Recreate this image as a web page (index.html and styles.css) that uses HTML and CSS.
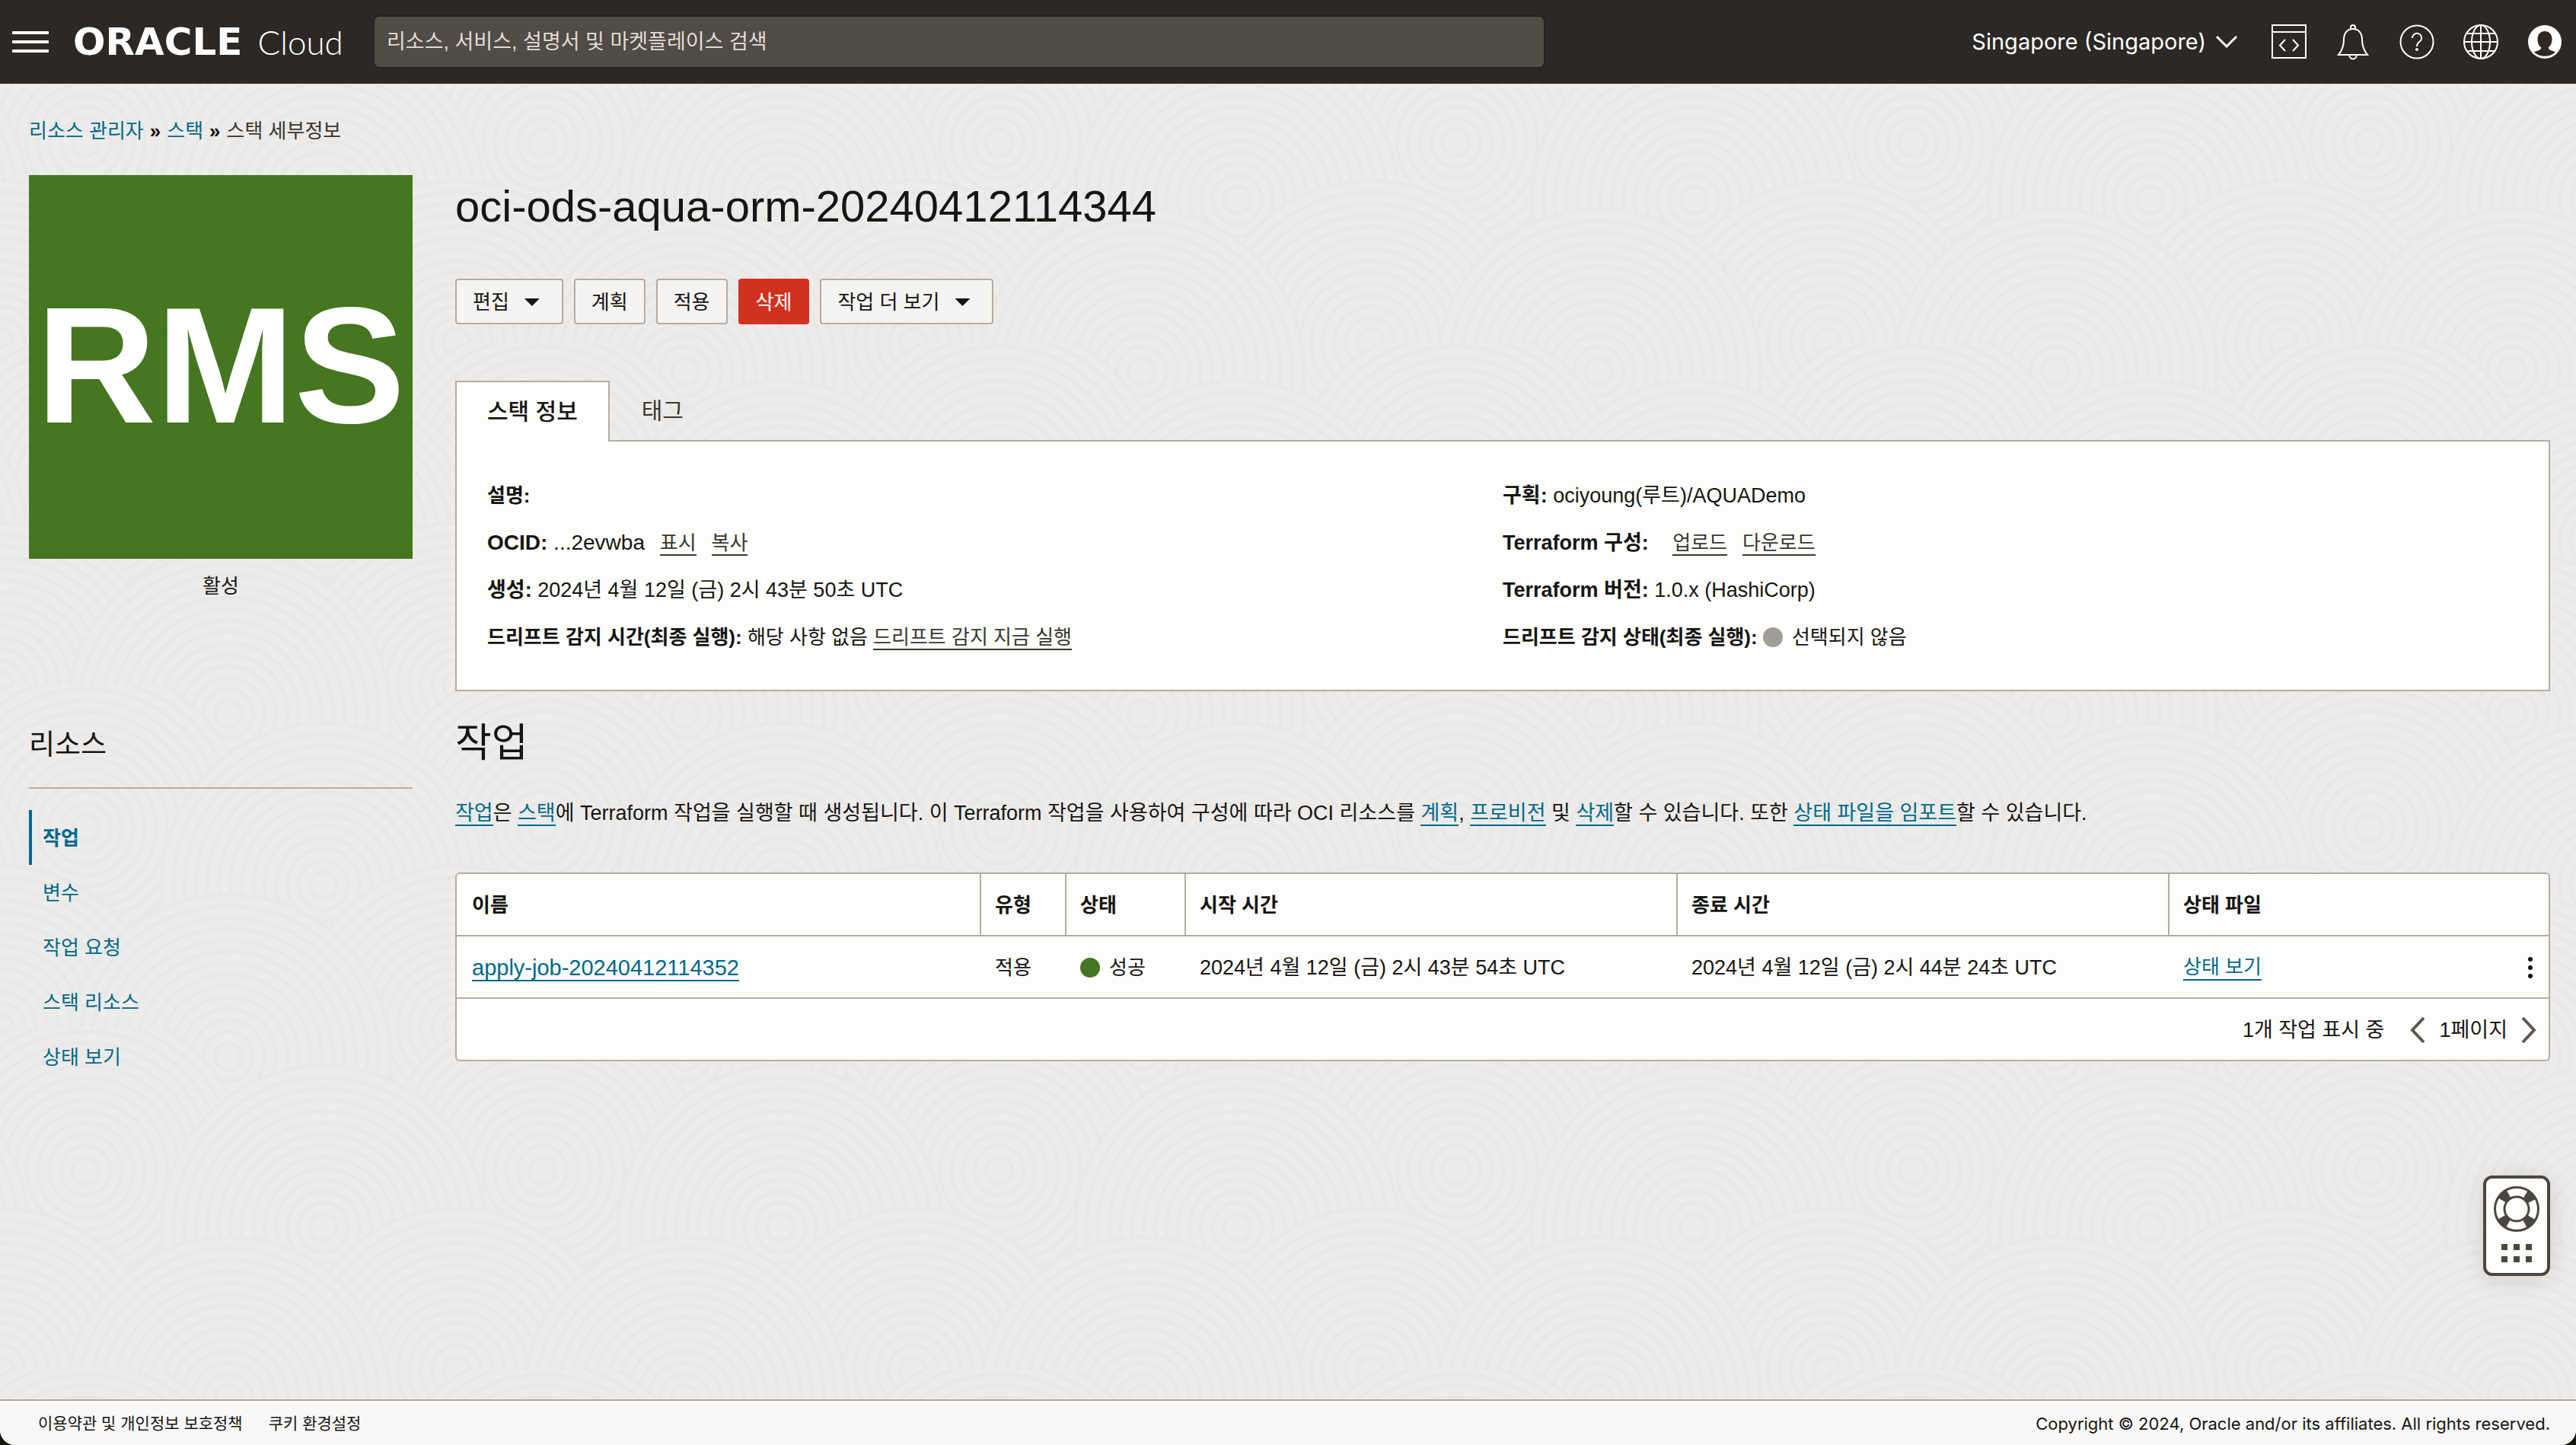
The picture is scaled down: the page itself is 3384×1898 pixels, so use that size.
FILE: index.html
```html
<!DOCTYPE html>
<html lang="ko">
<head>
<meta charset="utf-8">
<title>스택 세부정보</title>
<link rel="stylesheet" href="styles.css">
</head>
<body>
<header class="topbar">
  <button class="icon-button menu-button" aria-label="메뉴">
    <svg width="48" height="28" viewBox="0 0 48 28" fill="#fff"><rect width="48" height="4" rx="1"/><rect y="12" width="48" height="4" rx="1"/><rect y="24" width="48" height="4" rx="1"/></svg>
  </button>
  <a class="brand" href="#"><span class="brand-name">ORACLE</span><span class="brand-product">Cloud</span></a>
  <input class="search" type="search" aria-label="검색" placeholder="리소스, 서비스, 설명서 및 마켓플레이스 검색">
  <nav class="tools">
    <button class="region">Singapore (Singapore)
      <svg width="30" height="18" viewBox="0 0 30 18" fill="none" stroke="#fff" stroke-width="3"><path d="M2 2l13 13L28 2"/></svg>
    </button>
    <button class="icon-button" aria-label="개발자 도구">
      <svg width="46" height="48" viewBox="0 0 46 48" fill="none" stroke="#fff" stroke-width="2"><path d="M1 2h44v43H1zM1 11h44"/><path d="M18 21l-7 7.500 7 7.500M28 21l7 7.500-7 7.500"/></svg>
    </button>
    <button class="icon-button" aria-label="알림">
      <svg width="46" height="48" viewBox="0 0 46 48" fill="none" stroke="#fff" stroke-width="2"><path d="M4 41c5-6 7-12 7-20 0-9 5-14 12-14s12 5 12 14c0 8 2 14 7 20z"/><path d="M20 7V5a3 3 0 0 1 6 0v2M18 41a5 5.500 0 0 0 10 0"/></svg>
    </button>
    <button class="icon-button" aria-label="도움말">
      <svg width="46" height="48" viewBox="0 0 46 48" fill="none" stroke="#fff" stroke-width="2"><circle cx="23" cy="24" r="21.500"/><path d="M17 19a6 6 0 1 1 9 5c-2 1.500-3 2.500-3 6"/><circle cx="23" cy="34" r="1" fill="#fff"/></svg>
    </button>
    <button class="icon-button" aria-label="언어">
      <svg width="46" height="48" viewBox="0 0 46 48" fill="none" stroke="#fff" stroke-width="2"><circle cx="23" cy="24" r="22"/><ellipse cx="23" cy="24" rx="12" ry="22"/><path d="M23 2v44M1 24h44M4 13h38M4 36h38"/></svg>
    </button>
    <button class="icon-button" aria-label="프로파일">
      <svg width="46" height="48" viewBox="0 0 46 48"><circle cx="23" cy="24" r="22" fill="#fff"/><path d="M23 10c-6 0-9.500 4.500-9.500 10.500 0 5 2 9 5 11-1 4-6 4-9.500 6a21 21 0 0 0 28 0c-3.500-2-8.500-2-9.500-6 3-2 5-6 5-11C32.500 14.500 29 10 23 10z" fill="#2c2825"/></svg>
    </button>
  </nav>
</header>

<main class="page">
  <nav class="breadcrumb" aria-label="경로">
    <a href="#">리소스 관리자</a><span class="sep">»</span><a href="#">스택</a><span class="sep">»</span><span>스택 세부정보</span>
  </nav>
  <div class="columns">
    <aside class="side">
      <div class="badge">RMS</div>
      <p class="badge-state">활성</p>
      <h2 class="side-title">리소스</h2>
      <ul class="side-list">
        <li><a class="side-link active" href="#">작업</a></li>
        <li><a class="side-link" href="#">변수</a></li>
        <li><a class="side-link" href="#">작업 요청</a></li>
        <li><a class="side-link" href="#">스택 리소스</a></li>
        <li><a class="side-link" href="#">상태 보기</a></li>
      </ul>
    </aside>
    <section class="content">
      <h1 class="title">oci-ods-aqua-orm-20240412114344</h1>
      <div class="actions">
        <button class="btn">편집<span class="caret"></span></button>
        <button class="btn">계획</button>
        <button class="btn">적용</button>
        <button class="btn danger">삭제</button>
        <button class="btn">작업 더 보기<span class="caret"></span></button>
      </div>
      <div class="tabs" role="tablist">
        <button class="tab selected" role="tab" aria-selected="true">스택 정보</button>
        <button class="tab" role="tab" aria-selected="false">태그</button>
      </div>
      <div class="panel">
        <div class="facts">
          <p class="fact"><b>설명:</b></p>
          <p class="fact latin"><b>OCID:</b> ...2evwba <span class="links"><a href="#">표시</a><a href="#">복사</a></span></p>
          <p class="fact mixed"><b>생성:</b> 2024년 4월 12일 (금) 2시 43분 50초 UTC</p>
          <p class="fact"><b>드리프트 감지 시간(최종 실행):</b> 해당 사항 없음 <a href="#">드리프트 감지 지금 실행</a></p>
        </div>
        <div class="facts">
          <p class="fact mixed"><b>구획:</b> ociyoung(루트)/AQUADemo</p>
          <p class="fact mixed"><b>Terraform 구성:</b> <span class="links wide"><a href="#">업로드</a><a href="#">다운로드</a></span></p>
          <p class="fact mixed"><b>Terraform 버전:</b> 1.0.x (HashiCorp)</p>
          <p class="fact"><b>드리프트 감지 상태(최종 실행):</b> <span class="status"><span class="dot idle"></span>선택되지 않음</span></p>
        </div>
      </div>
      <h2 class="section-title">작업</h2>
      <p class="intro"><a href="#">작업</a>은 <a href="#">스택</a>에 Terraform 작업을 실행할 때 생성됩니다. 이 Terraform 작업을 사용하여 구성에 따라 OCI 리소스를 <a href="#">계획</a>, <a href="#">프로비전</a> 및 <a href="#">삭제</a>할 수 있습니다. 또한 <a href="#">상태 파일을 임포트</a>할 수 있습니다.</p>
      <div class="table-card">
        <table class="jobs">
          <colgroup><col class="c-name"><col class="c-type"><col class="c-state"><col class="c-time"><col class="c-time"><col class="c-file"></colgroup>
          <thead><tr><th>이름</th><th>유형</th><th>상태</th><th>시작 시간</th><th>종료 시간</th><th>상태 파일</th></tr></thead>
          <tbody><tr>
            <td class="job-name"><a href="#">apply-job-20240412114352</a></td>
            <td>적용</td>
            <td><span class="status"><span class="dot ok"></span>성공</span></td>
            <td class="mixed">2024년 4월 12일 (금) 2시 43분 54초 UTC</td>
            <td class="mixed">2024년 4월 12일 (금) 2시 44분 24초 UTC</td>
            <td><div class="file-cell"><a href="#">상태 보기</a>
              <button class="icon-button" aria-label="작업 메뉴"><svg width="8" height="32" viewBox="0 0 8 32" fill="#161513"><circle cx="4" cy="5" r="3"/><circle cx="4" cy="16" r="3"/><circle cx="4" cy="27" r="3"/></svg></button></div></td>
          </tr></tbody>
        </table>
        <div class="pager">
          <span class="pager-count">1개 작업 표시 중</span>
          <button class="icon-button" aria-label="이전"><svg width="20" height="36" viewBox="0 0 20 36" fill="none" stroke="#5f5653" stroke-width="4"><path d="M18 2L3 18l15 16"/></svg></button>
          <span>1페이지</span>
          <button class="icon-button" aria-label="다음"><svg width="20" height="36" viewBox="0 0 20 36" fill="none" stroke="#5f5653" stroke-width="4"><path d="M2 2l15 16L2 34"/></svg></button>
        </div>
      </div>
    </section>
  </div>
</main>

<button class="help" aria-label="지원">
  <svg width="60" height="60" viewBox="0 0 60 60" fill="none" stroke="#4c4643"><circle cx="30" cy="30" r="22.500" stroke-width="14" stroke-dasharray="12 23.340" stroke-dashoffset="-11.670"/><circle cx="30" cy="30" r="28.500" stroke-width="3"/><circle cx="30" cy="30" r="16" stroke-width="3"/></svg>
  <svg width="40" height="24" viewBox="0 0 40 24" fill="#4c4643"><path d="M0 0h8v8H0zM16 0h8v8h-8zM32 0h8v8h-8zM0 16h8v8H0zM16 16h8v8h-8zM32 16h8v8h-8z"/></svg>
</button>

<footer class="footer">
  <nav class="footer-links"><a href="#">이용약관 및 개인정보 보호정책</a><a href="#">쿠키 환경설정</a></nav>
  <p class="copyright">Copyright © 2024, Oracle and/or its affiliates. All rights reserved.</p>
</footer>
</body>
</html>
```
FILE: styles.css
```css
* { box-sizing: border-box; }

html { height: 100%; background: #15160c; }

body {
  margin: 0;
  min-height: 100%;
  display: flex;
  flex-direction: column;
  border-radius: 0 0 20px 20px;
  overflow: hidden;
  color: #161513;
  font: 26px/40px "Liberation Sans", "Noto Sans CJK KR", sans-serif;
  background: #edecea url("data:image/svg+xml,%3Csvg xmlns='http://www.w3.org/2000/svg' width='600' height='450' viewBox='0 0 480 360'%3E%3Cdefs%3E%3Cg id='r' fill='%23edecea' stroke='%23e9e8e6' stroke-width='4'%3E%3Ccircle r='170'/%3E%3Ccircle r='158'/%3E%3Ccircle r='146'/%3E%3Ccircle r='134'/%3E%3Ccircle r='122'/%3E%3Ccircle r='110'/%3E%3Ccircle r='98'/%3E%3Ccircle r='86'/%3E%3Ccircle r='74'/%3E%3Ccircle r='62'/%3E%3Ccircle r='50'/%3E%3Ccircle r='38'/%3E%3Ccircle r='26'/%3E%3Ccircle r='14'/%3E%3C/g%3E%3C/defs%3E%3Cuse href='%23r' x='0' y='0'/%3E%3Cuse href='%23r' x='480' y='0'/%3E%3Cuse href='%23r' x='240' y='30'/%3E%3Cuse href='%23r' x='90' y='150'/%3E%3Cuse href='%23r' x='570' y='150'/%3E%3Cuse href='%23r' x='340' y='210'/%3E%3Cuse href='%23r' x='-140' y='210'/%3E%3Cuse href='%23r' x='0' y='360'/%3E%3Cuse href='%23r' x='480' y='360'/%3E%3Cuse href='%23r' x='240' y='390'/%3E%3C/svg%3E");
}

h1, h2, p, ul { margin: 0; padding: 0; font-weight: 400; }
ul { list-style: none; }
a { color: #00688c; text-decoration: none; }
button { font: inherit; color: inherit; cursor: pointer; }
svg { display: block; }

.icon-button { padding: 0; border: 0; background: none; }

/* Top bar */
.topbar {
  display: flex;
  align-items: center;
  height: 110px;
  padding: 0 18px 0 16px;
  background: #2c2825;
  color: #fff;
}
.brand { display: flex; align-items: center; gap: 20px; width: 396px; margin-left: 32px; color: #fff; line-height: 66px; }
.brand-name { font-family: "DejaVu Sans", sans-serif; font-weight: 700; font-size: 50px; }
.brand-product { font-family: Lato, sans-serif; font-weight: 300; font-size: 44px; }
.search {
  width: 1536px;
  min-width: 0;
  height: 66px;
  padding: 0 16px;
  border: 0;
  border-radius: 6px;
  background: #514c46;
  color: #fff;
  font: inherit;
  font-size: 27px;
  box-shadow: 0 0 0 2px #262220;
}
.search::placeholder { color: #e0dcd7; opacity: 1; }
.tools { display: flex; align-items: center; gap: 38px; margin-left: auto; }
.region { display: flex; align-items: center; gap: 12px; padding: 0; border: 0; background: none; font: 29px/40px Inter, sans-serif; margin-right: 6px; white-space: nowrap; }

/* Page */
.page { flex: 1; padding: 42px 34px 60px 38px; }
.breadcrumb { display: flex; gap: 8px; color: #3a3632; }
.breadcrumb .sep { color: #161513; font-weight: 700; }
.columns { display: grid; grid-template-columns: 504px minmax(0, 1fr); gap: 56px; margin-top: 38px; }

.badge { height: 504px; background: #457620; color: #fff; font-weight: 700; font-size: 218px; line-height: 500px; text-align: center; }
.badge-state { margin-top: 16px; text-align: center; }
.side-title { margin-top: 162px; padding-bottom: 28px; border-bottom: 2px solid #b3aca5; font-size: 37px; line-height: 54px; }
.side-list { margin-top: 28px; }
.side-link { display: block; height: 72px; padding: 17px 0 0 14px; border-left: 4px solid transparent; }
.side-link.active { border-color: #00688c; font-weight: 700; }

.title { font-size: 58px; line-height: 82px; }
.actions { display: flex; gap: 14px; margin-top: 54px; }
.btn { display: flex; align-items: center; gap: 20px; height: 60px; padding: 2px 21px 0; border: 2px solid #b3aca5; border-radius: 4px; background: #f5f4f2; }
.btn.danger { border-color: #d13220; background: #d13220; color: #fff; }
.caret { width: 20px; height: 10px; margin-right: 8px; background: #161513; clip-path: polygon(0 0, 100% 0, 50% 100%); }

.tabs { display: flex; margin-top: 74px; position: relative; z-index: 1; margin-bottom: -2px; }
.tab { height: 78px; padding: 0 40px; border: 2px solid transparent; border-bottom: 0; background: none; font-size: 30px; color: #3a3632; }
.tab.selected { height: 80px; background: #fdfdfb; border-color: #b3aca5; color: #161513; font-weight: 500; }
.panel { display: grid; grid-template-columns: 1334px 1fr; padding: 40px 40px 38px; border: 2px solid #b3aca5; background: #fdfdfb; }
.fact { height: 62px; line-height: 62px; }
.fact a { color: #3a3632; border-bottom: 2px solid #3a3632; }
.latin { font-size: 28px; }
.mixed { font-size: 27px; }
.links { display: inline-flex; gap: 20px; margin-left: 12px; font-size: 26px; line-height: 30px; }
.links.wide { margin-left: 24px; }

.status { display: inline-flex; align-items: center; gap: 12px; vertical-align: top; }
.dot { width: 26px; height: 26px; border-radius: 50%; }
.idle { background: #a39d97; }
.ok { background: #457620; }

.section-title { margin-top: 32px; font-size: 52px; line-height: 72px; }
.intro { margin-top: 36px; font-size: 27px; }
.intro a, .jobs a { border-bottom: 2px solid #00688c; }

.table-card { margin-top: 58px; border: 2px solid #b3aca5; border-radius: 6px; background: #fdfdfb; }
.jobs { width: 100%; table-layout: fixed; border-collapse: separate; border-spacing: 0; }
.c-name { width: 25%; }
.c-type { width: 112px; }
.c-state { width: 157px; }
.c-time { width: 646px; }
.jobs th, .jobs td { height: 82px; padding: 2px 20px 0; border-bottom: 2px solid #b3aca5; text-align: left; white-space: nowrap; }
.jobs th + th { padding-left: 18px; border-left: 2px solid #b3aca5; }
.jobs .job-name { font-size: 29px; line-height: 32px; }
.file-cell { display: flex; justify-content: space-between; align-items: center; line-height: 32px; }
.pager { display: flex; justify-content: flex-end; align-items: center; gap: 18px; height: 80px; padding: 2px 16px 0 0; font-size: 27px; }
.pager-count { margin-right: 16px; }

/* Support widget floats over the page */
.help {
  position: fixed;
  right: 34px;
  bottom: 222px;
  display: flex;
  flex-direction: column;
  align-items: center;
  gap: 16px;
  width: 88px;
  height: 132px;
  padding: 10px 0 0;
  border: 4px solid #4c4643;
  border-radius: 12px;
  background: #fdfdfb;
  box-shadow: 0 4px 30px rgba(0, 0, 0, 0.12);
}

.footer { display: flex; justify-content: space-between; align-items: center; height: 60px; padding: 2px 34px 0 50px; border-top: 2px solid #b3aca5; background: #f9f8f7; font-size: 21px; }
.footer a { color: #161513; }
.footer-links { display: flex; gap: 34px; }
.copyright { font-family: Inter, sans-serif; font-size: 22px; }
```
